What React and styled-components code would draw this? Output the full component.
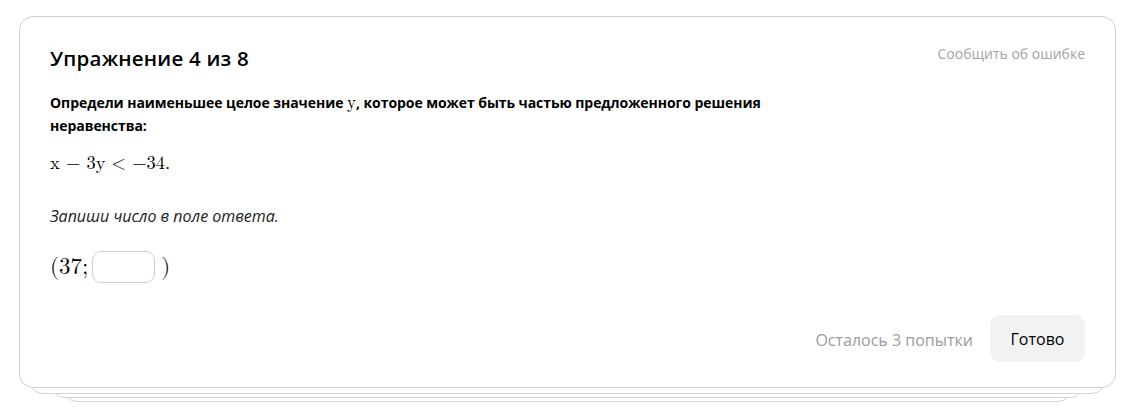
import React, { useState } from 'react';
import styled, { createGlobalStyle } from 'styled-components';

const GlobalStyle = createGlobalStyle`
    body {
        margin: 0;
        background: #fff;
        font-family: "Open Sans", "Noto Sans", sans-serif;
        color: #000;
    }
`

const Page = styled.div`
    padding: 16px 15px 20px 19px;
`

const Stack = styled.div`
    position: relative;
    width: 1097px;
`

const Layer = styled.div`
    position: absolute;
    left: ${p => p.$inset}px;
    right: ${p => p.$inset}px;
    top: 20px;
    bottom: ${p => -p.$drop}px;
    border: 1px solid #d4d4d4;
    border-radius: 14px;
    background: #fff;
    z-index: ${p => p.$z};
`

const Card = styled.div`
    position: relative;
    z-index: 5;
    box-sizing: border-box;
    height: 372px;
    border: 1px solid #cfcfcf;
    border-radius: 14px;
    background: #fff;
    padding: 26px 30px 25px 30px;
    display: flex;
    flex-direction: column;
`

const Header = styled.div`
    display: flex;
    justify-content: space-between;
    align-items: flex-start;
`

const Title = styled.h2`
    margin: 0;
    font-size: 20.5px;
    font-weight: 600;
    line-height: 30px;
    letter-spacing: 0.01em;
`

const Report = styled.a`
    font-size: 14px;
    color: #a3a3a3;
    line-height: 20px;
    margin-top: 1px;
    cursor: pointer;
`

const Question = styled.p`
    margin: 18px 0 0;
    max-width: 720px;
    font-size: 14px;
    font-weight: 700;
    line-height: 23px;
    letter-spacing: -0.004em;
`

const MathVar = styled.span`
    font-family: "Latin Modern Math", "DejaVu Serif", "Liberation Serif", serif;
    font-weight: 400;
    font-size: 17px;
    letter-spacing: 0;
`

const Formula = styled.div`
    margin-top: 14px;
    font-family: "Latin Modern Math", "Liberation Serif", serif;
    font-size: 18.5px;
    line-height: 26px;
`

const Hint = styled.p`
    margin: 28px 0 0;
    font-style: italic;
    font-size: 16px;
    line-height: 22px;
    color: #222;
`

const Answer = styled.div`
    margin-top: 24px;
    display: flex;
    align-items: center;
    gap: 2px;
    font-family: "Latin Modern Math", "Liberation Serif", serif;
    font-size: 23px;
`

const Input = styled.input`
    box-sizing: border-box;
    width: 63px;
    height: 32px;
    border: 1px solid #cfcfcf;
    border-radius: 9px;
    margin: 0 4px 0 2px;
    font-size: 16px;
    outline: none;
`

const Footer = styled.div`
    margin-top: auto;
    display: flex;
    justify-content: flex-end;
    align-items: center;
    gap: 17px;
`

const Attempts = styled.span`
    font-size: 16px;
    color: #9b9b9b;
    margin-top: 2px;
`

const Button = styled.button`
    border: none;
    border-radius: 10px;
    background: #f2f2f2;
    width: 95px;
    height: 47px;
    font-family: "Open Sans", "Noto Sans", sans-serif;
    font-size: 16px;
    color: #000;
    cursor: pointer;
    &:hover {
        background: #e8e8e8;
    }
`

const App = () => {
    const [value, setValue] = useState('');

    return (
        <>
            <GlobalStyle />
            <Page>
                <Stack>
                    <Layer $inset={10} $drop={6} $z={3} />
                    <Layer $inset={32} $drop={10} $z={2} />
                    <Layer $inset={44} $drop={14} $z={1} />
                    <Card>
                        <Header>
                            <Title>Упражнение 4 из 8</Title>
                            <Report>Сообщить об ошибке</Report>
                        </Header>
                        <Question>
                            Определи наименьшее целое значение <MathVar>y</MathVar>, которое может быть частью предложенного решения неравенства:
                        </Question>
                        <Formula>x − 3y &lt; −34.</Formula>
                        <Hint>Запиши число в поле ответа.</Hint>
                        <Answer>
                            <span>(37;</span>
                            <Input value={value} onChange={e => setValue(e.target.value)} />
                            <span>)</span>
                        </Answer>
                        <Footer>
                            <Attempts>Осталось 3 попытки</Attempts>
                            <Button>Готово</Button>
                        </Footer>
                    </Card>
                </Stack>
            </Page>
        </>
    );
};

export default App;
